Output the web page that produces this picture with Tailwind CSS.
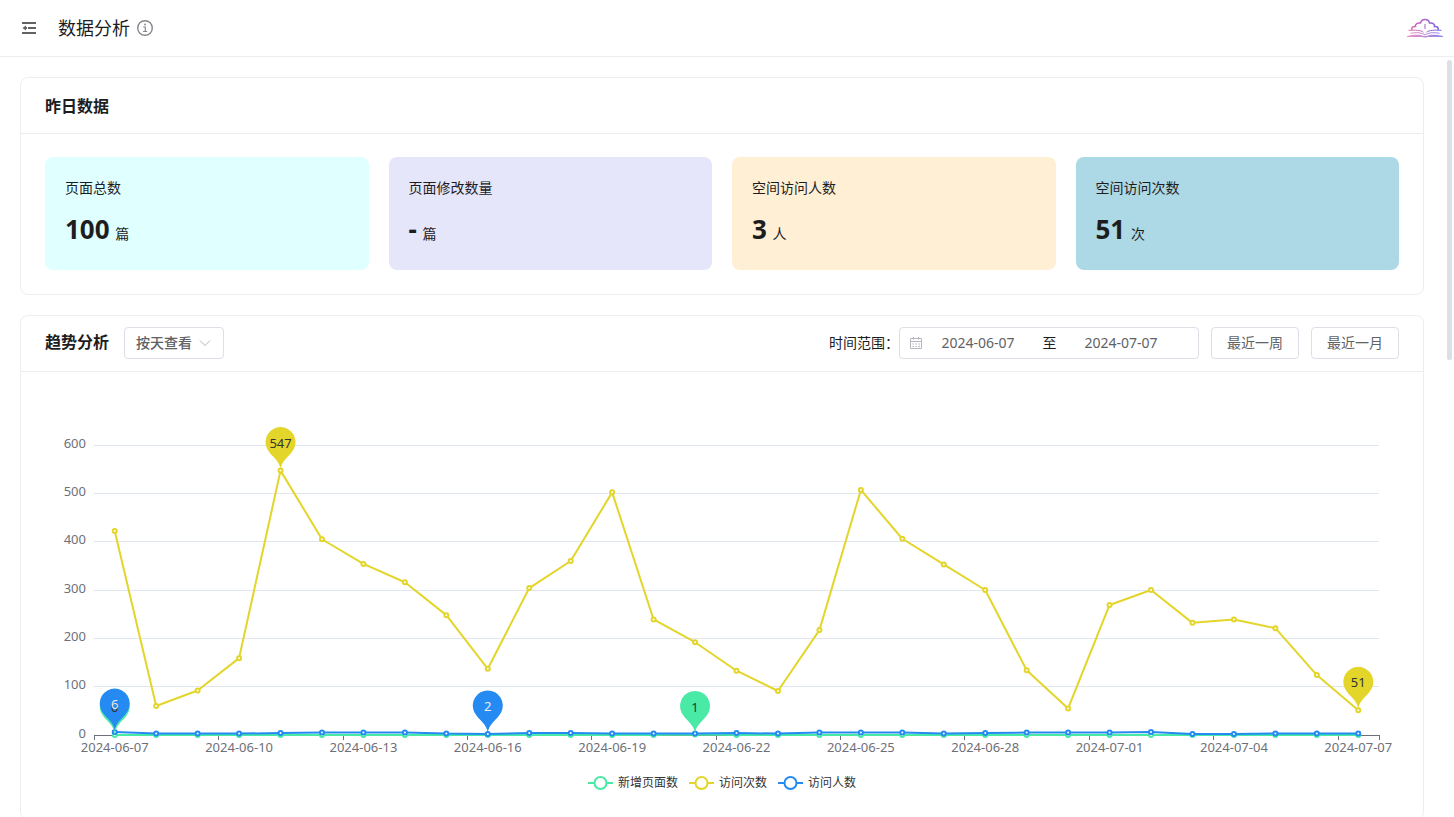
<!DOCTYPE html>
<html lang="zh-CN">
<head>
<meta charset="utf-8">
<title>数据分析</title>
<script src="https://cdn.jsdelivr.net/npm/@tailwindcss/browser@4"></script>
</head>
<body class="relative flex h-screen flex-col overflow-hidden bg-white font-['Noto_Sans','Noto_Sans_CJK_SC',sans-serif] text-sm text-[#1d1d1f]">

<header class="flex h-[57px] shrink-0 items-center border-b border-[#ebeef0] pr-[11px] pl-[22px]">
  <button type="button" aria-label="收起菜单" class="text-[#606266]">
    <svg class="block" width="14" height="12" viewBox="0 0 14 12" fill="currentColor"><path d="M0 0h14v2H0zM0 10h14v2H0zM6 5H14v2H6zM0.500 6 4 3.500v1.500h1v2H4v1.500z"/></svg>
  </button>
  <h1 class="ml-[22px] text-lg">数据分析</h1>
  <svg class="ml-[7px]" width="16" height="16" viewBox="0 0 16 16" fill="none" stroke="#85878c" stroke-width="1.400"><circle cx="8" cy="8" r="7.300"/><path d="M6.300 7h2v4.500M6 11.500h4.200" stroke-width="1.200"/><circle cx="8" cy="4.500" r=".9" fill="#85878c" stroke="none"/></svg>
  <a href="#" aria-label="首页" class="ml-auto">
    <svg class="block" width="36" height="20" viewBox="0 0 36 20" fill="none">
      <defs><linearGradient id="brand" gradientUnits="userSpaceOnUse" x1="2" y1="0" x2="34" y2="0"><stop offset="0" stop-color="#e46cae"/><stop offset=".5" stop-color="#a866c8"/><stop offset="1" stop-color="#6f63ea"/></linearGradient></defs>
      <g stroke="url(#brand)">
        <path stroke-width="1.500" d="M5 12C4 9.500 6 8 8.500 8.500C8 6 10.500 4.500 13.500 5C14 2.500 16 1.500 18 1.500S22 2.500 22.500 5C25.500 4.500 28 6 27.500 8.500C30 8 32 9.500 31 12"/>
        <path stroke-width="1.500" opacity=".7" d="M18 6v5"/>
        <path stroke-width="1" d="M1.500 12.300C8 12 14 12 16.500 14.300M34.500 12.300C28 12 22 12 19.500 14.300"/>
        <path stroke-width="1" opacity=".8" d="M3.500 15.300C9 14.300 14 14.300 18 17C22 14.300 27 14.300 32.500 15.300"/>
      </g>
      <path fill="url(#brand)" d="M0 19v-1C6 16.500 13 16 16.500 18h3C23 16 30 16.500 36 18v1H20.500q-2.500 1-5 0z" opacity=".75"/>
    </svg>
  </a>
</header>

<div class="absolute top-[60px] right-[2px] h-[300px] w-[5px] rounded-full bg-[#dddfe6]"></div>

<main class="flex min-h-0 flex-1 flex-col gap-5 overflow-hidden pt-5 pr-[30px] pl-5">
  <section class="shrink-0 rounded-lg border border-[#ebeef0]">
    <div class="flex h-14 items-center border-b border-[#ebeef0] px-6"><h2 class="text-base font-bold">昨日数据</h2></div>
    <div class="grid grid-cols-4 gap-5 px-6 pt-[23px] pb-6">
      <div class="h-[113px] rounded-lg bg-[#e0ffff] px-5 pt-5">
        <p class="leading-[22px]">页面总数</p>
        <p class="mt-[10px] leading-10"><strong class="mr-[2px] text-[26px]">100</strong> 篇</p>
      </div>
      <div class="h-[113px] rounded-lg bg-[#e6e6fa] px-5 pt-5">
        <p class="leading-[22px]">页面修改数量</p>
        <p class="mt-[10px] leading-10"><strong class="mr-[2px] text-[26px]">-</strong> 篇</p>
      </div>
      <div class="h-[113px] rounded-lg bg-[#ffefd5] px-5 pt-5">
        <p class="leading-[22px]">空间访问人数</p>
        <p class="mt-[10px] leading-10"><strong class="mr-[2px] text-[26px]">3</strong> 人</p>
      </div>
      <div class="h-[113px] rounded-lg bg-[#add8e6] px-5 pt-5">
        <p class="leading-[22px]">空间访问次数</p>
        <p class="mt-[10px] leading-10"><strong class="mr-[2px] text-[26px]">51</strong> 次</p>
      </div>
    </div>
  </section>

  <section class="shrink-0 rounded-lg border border-[#ebeef0]">
    <div class="flex h-14 items-center border-b border-[#ebeef0] px-6 pb-[2px]">
      <h2 class="pb-[2px] text-base font-bold">趋势分析</h2>
      <div class="relative ml-[15px]">
        <select aria-label="查看方式" class="block h-8 w-[100px] appearance-none rounded border border-[#dcdfe6] bg-white pl-[11px] text-sm font-medium text-[#606266]"><option>按天查看</option><option>按周查看</option><option>按月查看</option></select>
        <svg class="pointer-events-none absolute top-3 right-[13px]" width="12" height="8" viewBox="0 0 12 8" fill="none" stroke="#b4b7be" stroke-width="1"><path d="m1 1.500 5 5 5-5"/></svg>
      </div>
      <label for="from" class="ml-auto">时间范围：</label>
      <div class="flex h-8 w-[300px] items-center rounded border border-[#dcdfe6] pl-[9px]">
        <svg class="shrink-0" width="14" height="14" viewBox="0 0 14 14" fill="none" stroke="#b4b7be"><path d="M1.500 2.500h11v10h-11zM1.500 5.500h11M4.500 1v2.500M9.500 1v2.500"/><path stroke-dasharray="1.500 1.500" d="M3.500 8h8M3.500 10.500h8"/></svg>
        <input id="from" value="2024-06-07" class="w-[110px] text-center text-sm text-[#606266]">
        <span class="w-[33px] text-center">至</span>
        <input aria-label="结束日期" value="2024-07-07" class="w-[110px] text-center text-sm text-[#606266]">
      </div>
      <button type="button" class="ml-3 h-8 w-[88px] rounded border border-[#dcdfe6] text-sm text-[#606266]">最近一周</button>
      <button type="button" class="ml-3 h-8 w-[88px] rounded border border-[#dcdfe6] text-sm text-[#606266]">最近一月</button>
    </div>
    <div class="h-[447px] px-6">
      <svg id="trend" class="block h-[401px] w-full overflow-visible" role="img" aria-label="趋势折线图"></svg>
      <ul class="flex h-5 items-center justify-center gap-[11px] text-xs text-[#333333]">
        <li class="flex items-center gap-[5px]"><svg width="25" height="14" fill="white" stroke="#49e9a6" stroke-width="2"><path d="M0 7h25"/><circle cx="12.500" cy="7" r="6"/></svg>新增页面数</li>
        <li class="flex items-center gap-[5px]"><svg width="25" height="14" fill="white" stroke="#e3d529" stroke-width="2"><path d="M0 7h25"/><circle cx="12.500" cy="7" r="6"/></svg>访问次数</li>
        <li class="flex items-center gap-[5px]"><svg width="25" height="14" fill="white" stroke="#258af2" stroke-width="2"><path d="M0 7h25"/><circle cx="12.500" cy="7" r="6"/></svg>访问人数</li>
      </ul>
    </div>
  </section>
</main>

<script>
const svg = document.getElementById('trend');
const visits = [422,60,92,159,547,405,354,316,248,137,304,360,502,239,192,133,91,217,507,406,353,300,134,55,269,300,232,239,221,124,51];
const people = [6,3,3,3,4,5,5,5,3,2,4,4,3,3,3,4,3,5,5,5,3,4,5,5,5,6,2,2,3,3,3];
const pages = visits.map((_, i) => i === 14 ? 1 : 0);
const PIN = 'M-13.55-22.14A15 15 0 1 1 13.55-22.14C9.69-14.01 0-10.5 0 0C0-10.5-9.69-14.01-13.55-22.14Z';
const TOP = 73, BASE = 363, LEFT = 49, RIGHT = 20;

function draw() {
  const right = svg.parentElement.clientWidth - 48 - RIGHT;
  const band = (right - LEFT) / visits.length;
  const x = i => LEFT + band * (i + 0.5);
  const y = v => BASE - v * (BASE - TOP) / 600;
  let out = '';
  for (let v = 0; v <= 600; v += 100) {
    const gy = Math.floor(y(v)) + 0.5;
    out += `<path d="M${LEFT} ${gy}H${right}" stroke="${v ? '#e0e6f1' : '#6e7079'}"/>`;
    out += `<text x="${LEFT - 8}" y="${gy + 2}" text-anchor="end" class="fill-[#6e7079] text-[13px]">${v}</text>`;
  }
  for (let i = 0; i < visits.length; i += 3) {
    const tx = Math.round(LEFT + band * i) + 0.5;
    const d = new Date(Date.UTC(2024, 5, 7 + i)).toISOString().slice(0, 10);
    out += `<path d="M${tx} ${BASE}v5" stroke="#6e7079"/>`;
    out += `<text x="${x(i)}" y="${BASE + 17}" text-anchor="middle" class="fill-[#6e7079] text-[13px]">${d}</text>`;
  }
  out += `<path d="M${Math.round(right) + 0.5} ${BASE}v5" stroke="#6e7079"/>`;
  const series = [
    [pages, '#49e9a6', [[14, '#333333'], [0, '#333333']]],
    [visits, '#e3d529', [[4, '#333333'], [30, '#333333']]],
    [people, '#258af2', [[0, '#eeeeee'], [9, '#eeeeee']]]
  ];
  // Labels go above every pin, so a value under a neighbouring pin still shows.
  let pins = '', labels = '';
  for (const [data, color, marks] of series) {
    out += `<polyline fill="none" stroke="${color}" stroke-width="2" stroke-linejoin="bevel" points="${data.map((v, i) => x(i) + ',' + y(v)).join(' ')}"/>`;
    data.forEach((v, i) => { out += `<circle cx="${x(i)}" cy="${y(v)}" r="2" fill="white" stroke="${color}" stroke-width="2"/>`; });
    for (const [i, ink] of marks) {
      const at = `translate(${x(i)} ${y(data[i])})`;
      pins += `<path transform="${at}" d="${PIN}" fill="${color}"/>`;
      labels += `<text transform="${at}" y="-23" text-anchor="middle" fill="${ink}" class="text-[13px]">${data[i]}</text>`;
    }
  }
  svg.innerHTML = out + pins + labels;
}
new ResizeObserver(draw).observe(svg.parentElement);
</script>
</body>
</html>
